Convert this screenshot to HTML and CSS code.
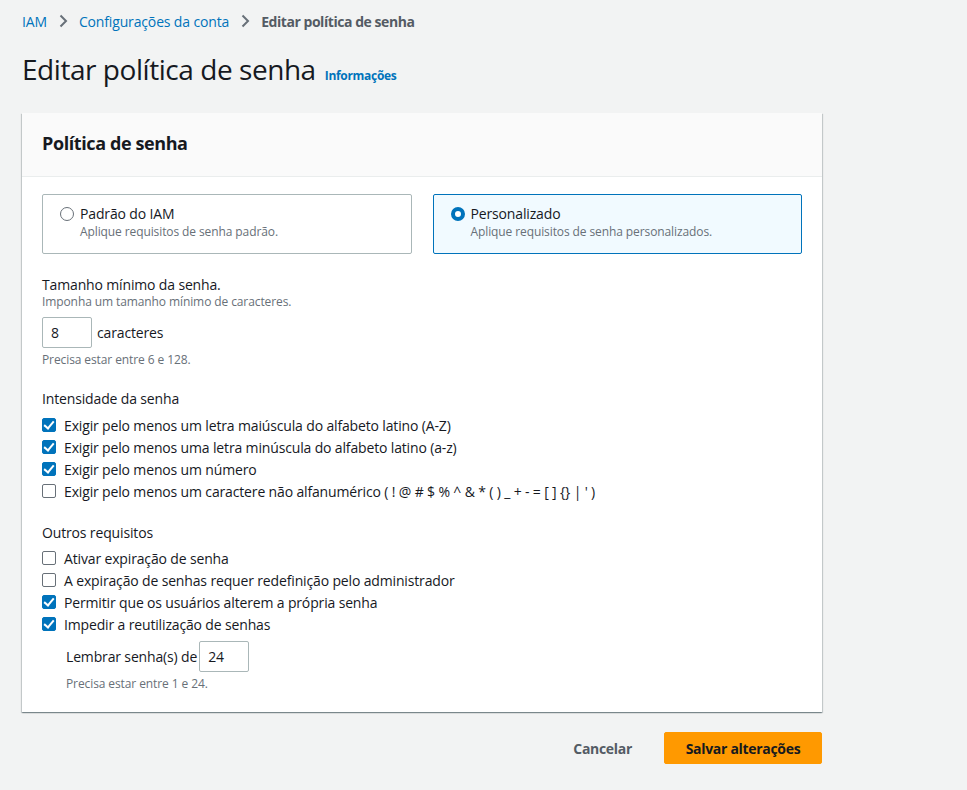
FILE: index.html
```html
<!DOCTYPE html>
<html lang="pt">
<head>
<meta charset="utf-8">
<link rel="stylesheet" href="styles.css">
</head>
<body>
<div class="page">
  <nav class="breadcrumbs">
    <a class="crumb-link">IAM</a>
    <svg class="chev" width="16" height="16" viewBox="0 0 16 16"><path d="M5.5 2.5 11 8l-5.5 5.5" fill="none" stroke="#687078" stroke-width="2"/></svg>
    <a class="crumb-link">Configurações da conta</a>
    <svg class="chev" width="16" height="16" viewBox="0 0 16 16"><path d="M5.5 2.5 11 8l-5.5 5.5" fill="none" stroke="#687078" stroke-width="2"/></svg>
    <span class="crumb-current">Editar política de senha</span>
  </nav>

  <header class="page-header">
    <h1>Editar política de senha</h1>
    <a class="info-link">Informações</a>
  </header>

  <section class="card">
    <div class="card-header">
      <h2>Política de senha</h2>
    </div>
    <div class="card-body">
      <div class="tiles">
        <div class="tile">
          <span class="radio"></span>
          <div>
            <div class="tile-label">Padrão do IAM</div>
            <div class="tile-desc">Aplique requisitos de senha padrão.</div>
          </div>
        </div>
        <div class="tile tile-selected">
          <span class="radio radio-checked"></span>
          <div>
            <div class="tile-label">Personalizado</div>
            <div class="tile-desc">Aplique requisitos de senha personalizados.</div>
          </div>
        </div>
      </div>

      <div class="field field-first">
        <div class="field-label">Tamanho mínimo da senha.</div>
        <div class="field-desc">Imponha um tamanho mínimo de caracteres.</div>
        <div class="input-row">
          <div class="input">8</div>
          <span class="input-suffix">caracteres</span>
        </div>
        <div class="field-constraint">Precisa estar entre 6 e 128.</div>
      </div>

      <div class="field group group-1">
        <div class="field-label">Intensidade da senha</div>
        <div class="checks">
          <div class="check-row"><span class="cb cb-on"></span>Exigir pelo menos um letra maiúscula do alfabeto latino (A-Z)</div>
          <div class="check-row"><span class="cb cb-on"></span>Exigir pelo menos uma letra minúscula do alfabeto latino (a-z)</div>
          <div class="check-row"><span class="cb cb-on"></span>Exigir pelo menos um número</div>
          <div class="check-row"><span class="cb"></span>Exigir pelo menos um caractere não alfanumérico ( ! @ # $ % ^ &amp; * ( ) _ + - = [ ] {} | ' )</div>
        </div>
      </div>

      <div class="field group group-2">
        <div class="field-label">Outros requisitos</div>
        <div class="checks checks-2">
          <div class="check-row"><span class="cb"></span>Ativar expiração de senha</div>
          <div class="check-row"><span class="cb"></span>A expiração de senhas requer redefinição pelo administrador</div>
          <div class="check-row"><span class="cb cb-on"></span>Permitir que os usuários alterem a própria senha</div>
          <div class="check-row"><span class="cb cb-on"></span>Impedir a reutilização de senhas</div>
        </div>
        <div class="sub-field">
          <div class="input-row">
            <span class="input-prefix">Lembrar senha(s) de</span>
            <div class="input">24</div>
          </div>
          <div class="field-constraint">Precisa estar entre 1 e 24.</div>
        </div>
      </div>
    </div>
  </section>

  <div class="actions">
    <button class="btn-link">Cancelar</button>
    <button class="btn-primary">Salvar alterações</button>
  </div>
</div>
</body>
</html>
```

FILE: styles.css
```css
* { box-sizing: border-box; }
html, body { margin: 0; padding: 0; }
body {
  background: #f2f3f3;
  font-family: "Open Sans", "Noto Sans", sans-serif;
  color: #16191f;
  font-size: 14px;
  letter-spacing: -0.15px;
  width: 967px;
  height: 790px;
  overflow: hidden;
}
.page {
  width: 800px;
  margin-left: 22px;
  padding-top: 11px;
}
.breadcrumbs {
  display: flex;
  align-items: center;
  height: 20px;
  font-size: 14px;
}
.crumb-link { color: #0073bb; }
.chev { margin: 0 8px 0 8px; }
.crumb-current { color: #545b64; font-weight: 700; letter-spacing: -0.45px; }

.page-header {
  display: flex;
  align-items: baseline;
  margin-top: 20px;
  height: 38px;
}
.page-header h1 {
  margin: 0;
  font-size: 28px;
  font-weight: 400;
  line-height: 36px;
  letter-spacing: -0.45px;
  color: #16191f;
}
.info-link {
  margin-left: 9px;
  font-size: 12px;
  font-weight: 700;
  letter-spacing: -0.3px;
  color: #0073bb;
}

.card {
  margin-top: 24px;
  background: #fff;
  box-shadow: 0 1px 1px 0 rgba(0,28,36,.3), 1px 1px 1px 0 rgba(0,28,36,.15), -1px 1px 1px 0 rgba(0,28,36,.15);
}
.card-header {
  background: #fafafa;
  border-bottom: 1px solid #eaeded;
  height: 64px;
  padding: 0 20px 4px 20px;
  display: flex;
  align-items: center;
}
.card-header h2 {
  margin: 0;
  font-size: 18px;
  font-weight: 700;
  line-height: 22px;
  letter-spacing: -0.4px;
}
.card-body {
  padding: 17px 20px 20px 20px;
}
.tiles {
  display: grid;
  grid-template-columns: 1fr 1fr;
  gap: 21px;
}
.tile {
  border: 1px solid #aab7b8;
  border-radius: 2px;
  height: 60px;
  padding: 10px 17px 11px 17px;
  display: flex;
  gap: 6px;
}
.tile-selected {
  border-color: #0073bb;
  background: #f1faff;
}
.radio {
  width: 14px;
  height: 14px;
  border-radius: 50%;
  border: 1px solid #687078;
  margin-top: 2px;
  flex: none;
}
.radio-checked {
  border: 4px solid #0073bb;
  background: #fff;
}
.tile-label { font-size: 14px; line-height: 18px; color: #16191f; }
.tile-desc { font-size: 12px; line-height: 18px; color: #687078; letter-spacing: -0.1px; }

.field-first { margin-top: 22px; }
.field-label { font-size: 14px; line-height: 18px; }
.field-desc { font-size: 12px; line-height: 16px; color: #687078; letter-spacing: -0.1px; }
.input-row {
  display: flex;
  align-items: center;
  margin-top: 7px;
}
.input {
  width: 50px;
  height: 31px;
  border: 1px solid #aab7b8;
  border-radius: 2px;
  background: #fff;
  padding: 0 8px;
  display: flex;
  align-items: center;
  font-size: 14px;
}
.input-suffix { margin-left: 5px; }
.input-prefix { margin-right: 2px; }
.field-constraint {
  font-size: 12px;
  line-height: 16px;
  color: #687078;
  margin-top: 4px;
  letter-spacing: -0.1px;
}
.group-1 { margin-top: 22px; }
.group-2 { margin-top: 22px; }
.checks { margin-top: 6px; }
.checks-2 { margin-top: 5px; }
.check-row {
  display: flex;
  align-items: center;
  height: 22px;
  font-size: 14px;
}
.cb {
  width: 14px;
  height: 14px;
  border: 1px solid #687078;
  border-radius: 2px;
  margin-right: 8px;
  flex: none;
  background: #fff;
  position: relative;
}
.cb-on {
  background: #0073bb;
  border-color: #0073bb;
}
.cb-on::after {
  content: "";
  position: absolute;
  left: 3px;
  top: 0px;
  width: 4px;
  height: 8px;
  border-right: 2px solid #fff;
  border-bottom: 2px solid #fff;
  transform: rotate(40deg);
}
.sub-field { padding-left: 24px; margin-top: 6px; }
.sub-field .input-row { margin-top: 4px; }

.actions {
  display: flex;
  justify-content: flex-end;
  align-items: center;
  margin-top: 20px;
  gap: 20px;
}
.btn-link {
  background: none;
  border: none;
  font-family: inherit;
  font-size: 14px;
  font-weight: 700;
  letter-spacing: -0.3px;
  color: #545b64;
  padding: 4px 12px;
}
.btn-primary {
  background: #ff9900;
  border: 1px solid #ff9900;
  border-radius: 2px;
  font-family: inherit;
  font-size: 14px;
  font-weight: 700;
  letter-spacing: -0.3px;
  color: #16191f;
  width: 158px;
  height: 32px;
}
```
